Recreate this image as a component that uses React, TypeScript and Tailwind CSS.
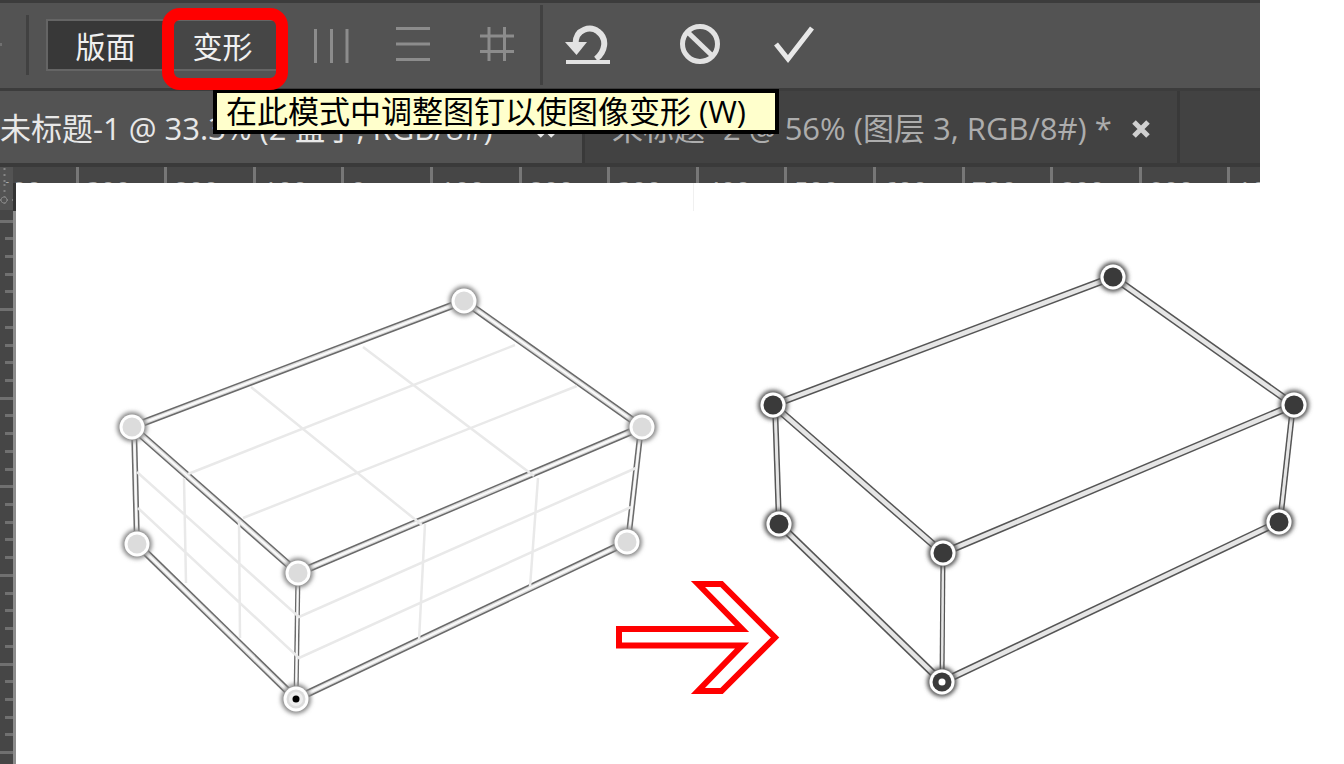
type Point = [number, number];

interface BoxShape {
  nodes: Point[];
  origin: Point;
  edges: [Point, Point, number][];
}

function makeBox(a: Point, b: Point, c: Point, d: Point, e: Point, f: Point, g: Point): BoxShape {
  return {
    nodes: [a, b, c, d, e, f],
    origin: g,
    edges: [
      [d, g, 5],
      [[a[0] + 2, a[1]], e, 6],
      [[c[0] - 1, c[1]], [f[0] + 1, f[1]], 6],
      [a, b, 7.5],
      [b, c, 7.5],
      [d, c, 7.5],
      [a, d, 7.5],
      [e, g, 7.5],
      [g, f, 7.5],
    ],
  };
}

const layoutBox = makeBox([132, 427], [464, 301], [642, 427], [298, 573], [137, 544], [627, 542], [296, 699]);
const warpBox = makeBox([773, 405], [1113, 277], [1294, 405], [943, 553], [779, 524], [1279, 522], [942, 682]);

const meshLines = [
  'M251 387L422 525',
  'M363 347L534 476',
  'M188 474L515 345',
  'M243 518L577 386',
  'M425 524L419 640',
  'M538 478L530 587',
  'M184 478L186 583',
  'M239 520L240 638',
  'M137 472L299 617L636 468',
  'M138 508L299 658L631 507',
];

const range = (n: number) => Array.from({ length: n }, (_, i) => i);

function Edges({ shape, line, fill, core }: { shape: BoxShape; line: string; fill: string; core: string }) {
  return (
    <g>
      {shape.edges.map(([p, q, w], i) => (
        <g key={i}>
          <line x1={p[0]} y1={p[1]} x2={q[0]} y2={q[1]} stroke={line} strokeWidth={w} />
          <line x1={p[0]} y1={p[1]} x2={q[0]} y2={q[1]} stroke={fill} strokeWidth={w - 3} />
          <line x1={p[0]} y1={p[1]} x2={q[0]} y2={q[1]} stroke={core} strokeWidth="2" />
        </g>
      ))}
    </g>
  );
}

function Pins({ shape, dark }: { shape: BoxShape; dark?: boolean }) {
  return (
    <g>
      {[...shape.nodes, shape.origin].map(([x, y], i) => (
        <g key={i}>
          <circle cx={x} cy={y} r="15" fill={dark ? '#555' : '#888'} filter="url(#glow)" />
          <circle cx={x} cy={y} r="13" fill={dark ? '#888' : '#a0a0a0'} />
          <circle cx={x} cy={y} r="12.5" fill="#fff" />
          <circle cx={x} cy={y} r="9.5" fill={dark ? '#3a3a3a' : '#dcdcdc'} />
        </g>
      ))}
      {!dark && <circle cx={shape.origin[0]} cy={shape.origin[1]} r="7" fill="#eee" />}
      <circle cx={shape.origin[0]} cy={shape.origin[1]} r="3.5" fill={dark ? '#fff' : '#000'} />
    </g>
  );
}

function Canvas() {
  return (
    <svg viewBox="16 183 1328 581" className="block h-auto min-w-0 flex-1 self-start" role="img" aria-label="透视变形">
      <defs>
        <filter id="glow" x="-50%" y="-50%" width="200%" height="200%">
          <feGaussianBlur stdDeviation="2" />
        </filter>
      </defs>
      <path d="M693.5 183V211" stroke="#f0f0f0" />
      <Edges shape={layoutBox} line="#6a6a6a" fill="#dcdcdc" core="#fafafa" />
      <path d={meshLines.join('')} fill="none" stroke="#e9e9e9" strokeWidth="2.5" />
      <Pins shape={layoutBox} />
      <Edges shape={warpBox} line="#555" fill="#e6e6e6" core="#e6e6e6" />
      <Pins shape={warpBox} dark />
      <path
        d="M698 584L742 629H619V645.5H742L698 691H721.5L775 637.5L721.5 584Z"
        fill="#fff"
        stroke="#f00"
        strokeWidth="6"
        strokeMiterlimit="10"
      />
    </svg>
  );
}

function TopRuler() {
  return (
    <svg className="block h-4 w-full" aria-hidden="true">
      <rect width="13" height="16" fill="#535353" />
      <path d="M4.5 1V16" stroke="#858585" strokeWidth="2" strokeDasharray="2 4" />
      {range(15).map((i) => {
        const x = Math.round(76.5 + (i - 1) * 88.6);
        return (
          <g key={i}>
            <rect x={x - 1} width="3" height="16" fill="#777" />
            <text x={x + 9} y="33" className="fill-[#aaa] font-['Open_Sans'] text-[26px]">
              {Math.abs(i - 4) * 100}
            </text>
          </g>
        );
      })}
    </svg>
  );
}

function SideRuler() {
  return (
    <svg viewBox="0 183 16 581" className="h-[581px] w-4 shrink-0" aria-hidden="true">
      <rect y="183" width="16" height="581" fill="#464646" />
      <rect y="183" width="13" height="27" fill="#535353" />
      <path d="M4.5 184V208M0 200H13" stroke="#808080" strokeWidth="2" strokeDasharray="2 4" />
      <circle cx="4" cy="200" r="3" fill="#535353" stroke="#808080" />
      {range(32).map((i) => (
        <rect
          key={i}
          x={i % 5 === 0 ? 0 : 5}
          y={Math.round(219.5 + i * 17.72)}
          width={i % 5 === 0 ? 13 : 8}
          height="3"
          fill="#707070"
        />
      ))}
      <rect x="13" y="183" width="3" height="28" fill="#333" />
      <rect x="13" y="211" width="3" height="553" fill="#8c8c8c" />
    </svg>
  );
}

function CloseIcon() {
  return (
    <svg width="18" height="18" viewBox="0 0 18 18" fill="none" stroke="currentColor" strokeWidth="5">
      <path d="M2 2L16 16M16 2L2 16" />
    </svg>
  );
}

function OptionsBar() {
  return (
    <div className="flex h-[91px] items-center overflow-hidden border-t-3 border-b-3 border-[#3c3c3c] bg-[#535353] pb-[2px]">
      <div className="h-[3px] w-[2px] shrink-0 bg-[#707070]" />
      <div className="ml-6 h-[60px] w-[3px] shrink-0 bg-[#414141]" />
      <div className="ml-[17px] flex h-[52px] shrink-0 border-2 border-[#656565] text-[30px] leading-none text-[#f0f0f0]">
        <button className="w-[115px] bg-[#383838] pt-1">版面</button>
        <button className="w-[119px] bg-[#464646] pt-1">变形</button>
      </div>
      <button aria-label="垂直拉直" className="ml-[29px] shrink-0 text-[#8c8c8c]">
        <svg width="36" height="36" fill="none" stroke="currentColor" strokeWidth="3">
          <path d="M2.5 2V36M18.5 2V36M34 2V36" />
        </svg>
      </button>
      <button aria-label="水平拉直" className="ml-[46px] shrink-0 text-[#8c8c8c]">
        <svg width="36" height="36" fill="none" stroke="currentColor" strokeWidth="3">
          <path d="M1 1.5H35M1 17H35M1 32.5H35" />
        </svg>
      </button>
      <button aria-label="自动变形" className="ml-[47px] shrink-0 text-[#8c8c8c]">
        <svg width="36" height="36" fill="none" stroke="currentColor" strokeWidth="3">
          <path d="M11 0V34M26.5 0V34M2 9H36M2 24.5H36" />
        </svg>
      </button>
      <div className="ml-[26px] h-20 w-[3px] shrink-0 bg-[#414141]" />
      <button aria-label="移去变形" className="ml-[22px] shrink-0 text-[#e2e2e2]">
        <svg width="46" height="40" viewBox="0 0 46 40" fill="none" stroke="currentColor">
          <path d="M10.500 19C10.500 3 26 1 33 6.500C43 14 40 27 31 34" strokeWidth="6" />
          <path d="M0 17H22L11.500 30Z" fill="currentColor" stroke="none" />
          <path d="M1 37H45" strokeWidth="4" />
        </svg>
      </button>
      <button aria-label="取消" className="ml-[68px] shrink-0 text-[#e2e2e2]">
        <svg width="42" height="42" fill="none" stroke="currentColor" strokeWidth="5">
          <circle cx="21" cy="20" r="17.5" />
          <path d="M8.500 8L33.500 32" />
        </svg>
      </button>
      <button aria-label="提交" className="ml-[52px] shrink-0 text-[#e8e8e8]">
        <svg width="44" height="40" fill="none" stroke="currentColor" strokeWidth="5">
          <path d="M3 19L15 34L39 3" />
        </svg>
      </button>
    </div>
  );
}

function DocumentTabs() {
  return (
    <div className="flex h-[76px] border-b-4 border-[#3a3a3a] bg-[#424242] text-[31px] whitespace-pre">
      <div className="flex w-[582px] shrink-0 items-center bg-[#535353] pt-[3px] text-[#e8e8e8]">
        <button className="w-[537px] text-left">未标题-1 @ 33.3% (2 盒子, RGB/8#)</button>
        <button aria-label="关闭 未标题-1">
          <CloseIcon />
        </button>
      </div>
      <div className="flex min-w-0 items-center border-r-3 border-l-3 border-[#393939] px-[27px] pt-[3px] text-[#adadad]">
        <button className="shrink-0 text-left">未标题 -2 @ 56% (图层 3, RGB/8#) *</button>
        <button aria-label="关闭 未标题-2" className="ml-5 shrink-0 text-[#cfcfcf]">
          <CloseIcon />
        </button>
      </div>
    </div>
  );
}

export default function App() {
  return (
    <div className="min-h-screen overflow-hidden bg-white font-['Open_Sans','Noto_Sans_CJK_SC',sans-serif]">
      <header className="relative mr-[84px] bg-[#464646]">
        <OptionsBar />
        <DocumentTabs />
        <TopRuler />
        <div
          role="tooltip"
          className="absolute top-[89px] left-[213px] flex h-[45px] w-[566px] items-center border-4 border-black bg-[#ffffcc] pl-[9px] text-[31px] leading-none whitespace-pre text-black"
        >
          在此模式中调整图钉以使图像变形 (W)
        </div>
        <div className="pointer-events-none absolute top-2 left-[162px] h-[82px] w-[126px] rounded-[18px] border-12 border-[#f00]" />
      </header>
      <main className="flex">
        <SideRuler />
        <Canvas />
      </main>
    </div>
  );
}
